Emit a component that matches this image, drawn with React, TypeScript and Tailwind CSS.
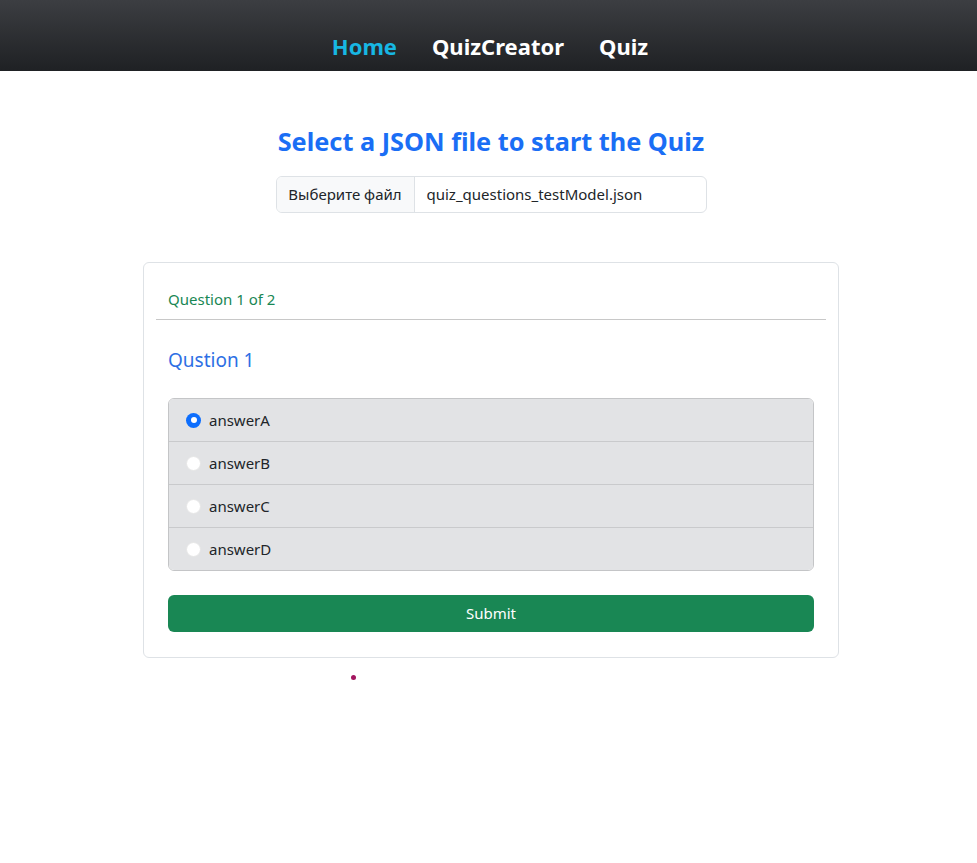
import { useState } from 'react'

const answers = ['answerA', 'answerB', 'answerC', 'answerD']

function NavBar() {
  return (
    <nav className="h-[71px] bg-gradient-to-b from-[#3c3e42] to-[#1f2124] flex items-end justify-center pb-[10px]">
      <div className="flex gap-[35px] pl-[3px] text-[22px] font-bold leading-[30px]">
        <a className="text-[#17b7e3]">Home</a>
        <a className="text-white">QuizCreator</a>
        <a className="text-white">Quiz</a>
      </div>
    </nav>
  )
}

function Radio({ checked }: { checked: boolean }) {
  if (checked) {
    return (
      <span className="w-[15px] h-[15px] rounded-full bg-[#0d6efd] flex items-center justify-center shrink-0">
        <span className="w-[6px] h-[6px] rounded-full bg-white" />
      </span>
    )
  }
  return <span className="w-[15px] h-[15px] rounded-full bg-white border border-[#e6e6e6] shrink-0" />
}

export default function App() {
  const [selected, setSelected] = useState(0)
  return (
    <div className="min-h-[863px] bg-white text-[#212529]" style={{ fontFamily: '"Noto Sans", "Open Sans", sans-serif' }}>
      <NavBar />
      <div className="pl-[5px]">
        <h2 className="mt-[54px] text-center text-[25.3px] font-bold leading-[32px] text-[#1a6ef5]">
          Select a JSON file to start the Quiz
        </h2>
        <div className="mt-[19px] mx-auto w-[431px] h-[37px] flex border border-[#dee2e6] rounded-[6px] overflow-hidden text-[15px]">
          <div className="w-[138px] bg-[#f8f9fa] border-r border-[#dee2e6] flex items-center justify-center">
            Выберите файл
          </div>
          <div className="flex items-center pl-[12px]">quiz_questions_testModel.json</div>
        </div>

        <div className="mt-[49px] mx-auto w-[696px] border border-[#dee2e6] rounded-[6px] p-3">
          <div className="px-3 pt-3 pb-2 border-b border-[#c8c8c8] text-[15px] leading-[24px] text-[#198754]">
            Question 1 of 2
          </div>
          <div className="px-3">
            <h5 className="mt-[25px] mb-[23px] text-[19px] leading-[30px] text-[#2d6fe4]">Qustion 1</h5>
            <div className="border border-[#c4c5c7] rounded-[6px] overflow-hidden">
              {answers.map((a, i) => (
                <label
                  key={a}
                  onClick={() => setSelected(i)}
                  className={`bg-[#e2e3e5] flex items-center gap-[8px] pl-[17px] text-[15px] ${i > 0 ? 'h-[43px] border-t border-[#c9cacc]' : 'h-[42px]'}`}
                >
                  <Radio checked={selected === i} />
                  <span>{a}</span>
                </label>
              ))}
            </div>
            <button className="mt-[24px] mb-[13px] w-full h-[37px] rounded-[6px] bg-[#198754] text-white text-[15px]">
              Submit
            </button>
          </div>
        </div>
        <div className="ml-[346px] mt-[17px] w-[5px] h-[5px] rounded-full bg-[#a3155f]" />
      </div>
    </div>
  )
}
